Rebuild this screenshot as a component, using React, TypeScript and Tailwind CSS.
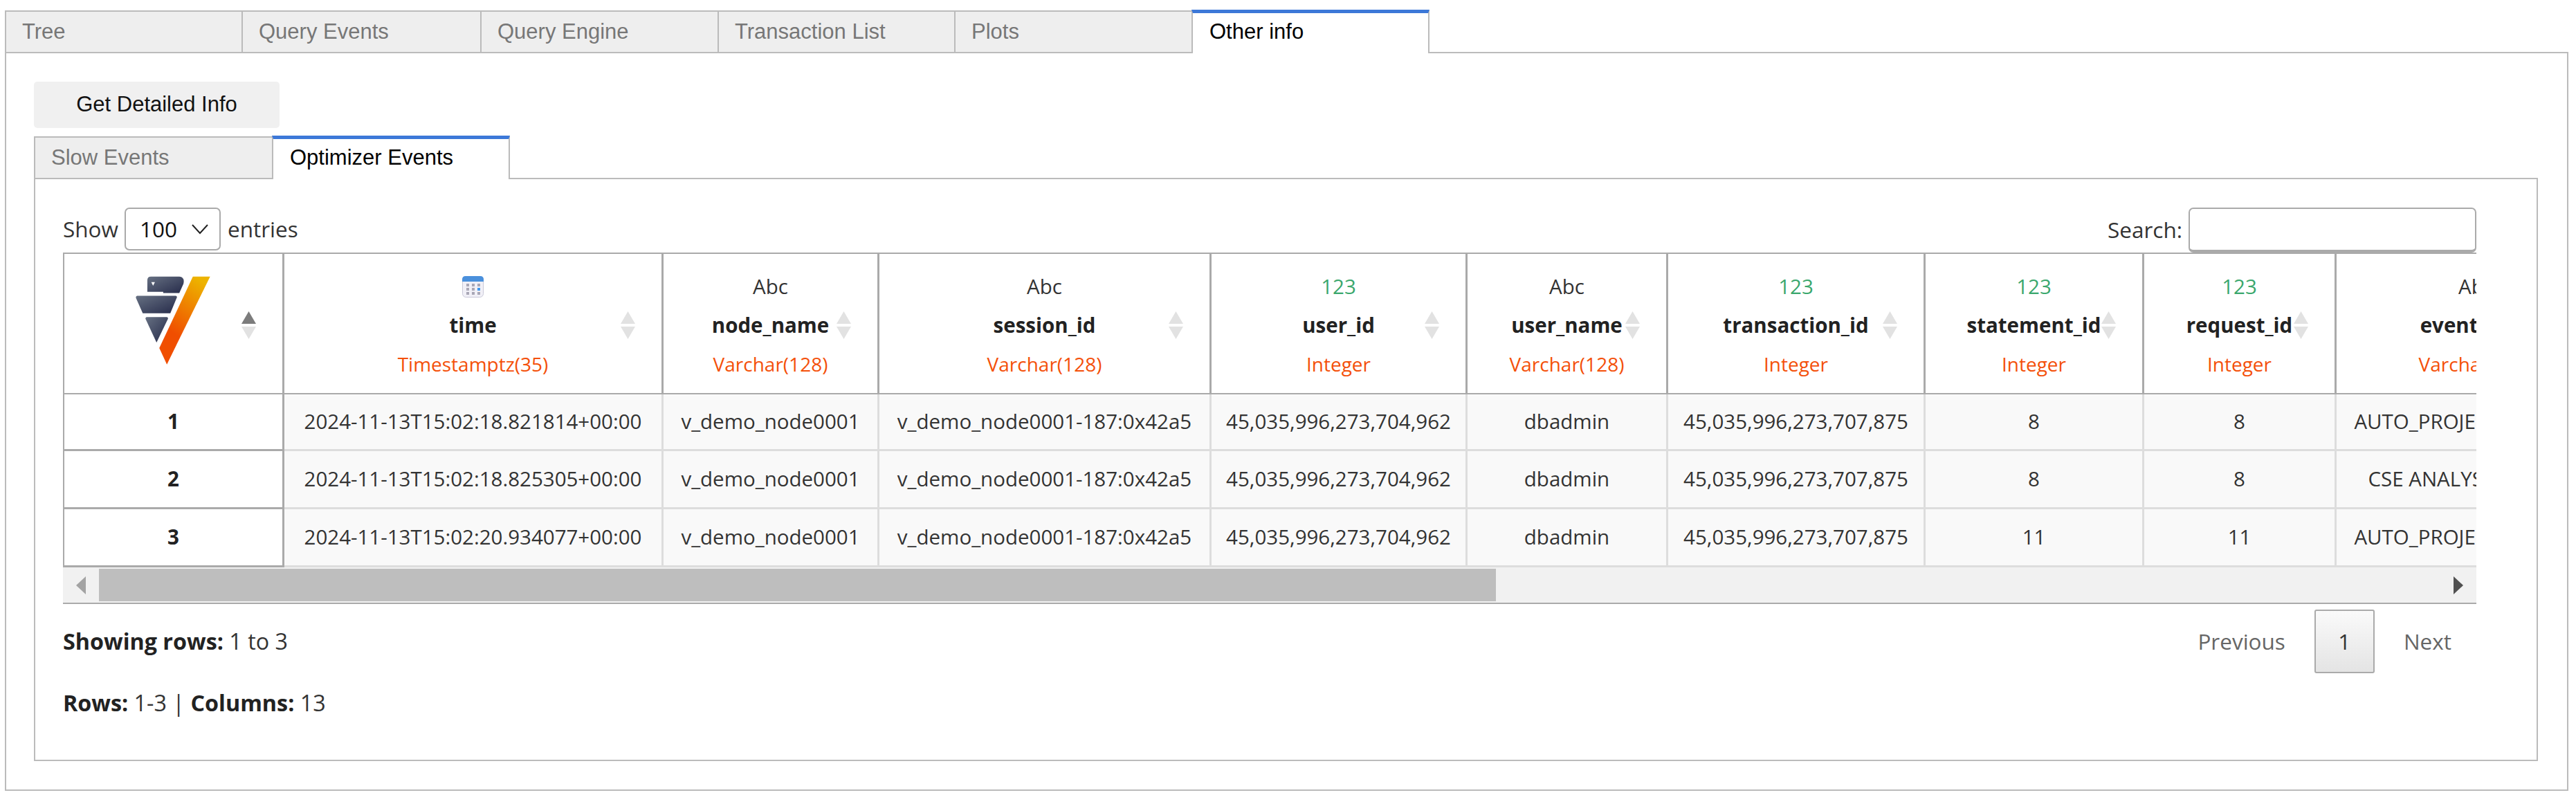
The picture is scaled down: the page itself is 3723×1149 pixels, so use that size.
import React from "react";

const sans = "font-['Open_Sans','Noto_Sans',sans-serif]";

function Logo() {
  return (
    <svg viewBox="315 117 325 383" className="h-[128px] w-[108px]">
      <defs>
        <linearGradient id="dark" x1="0" y1="0" x2="1" y2="1">
          <stop offset="0" stopColor="#667082" />
          <stop offset="1" stopColor="#262b4a" />
        </linearGradient>
        <linearGradient id="flame" x1="0.7" y1="0" x2="0.3" y2="1">
          <stop offset="0" stopColor="#edb300" />
          <stop offset="0.7" stopColor="#f04e00" />
          <stop offset="1" stopColor="#f04e00" />
        </linearGradient>
      </defs>
      <path d="M382 118H505Q530 120 523 150L505 190H435V184H366V134Q366 118 382 118Z" fill="url(#dark)" />
      <path d="M383 142H399L391 158Z" fill="#fff" />
      <path d="M322 202H490Q497 204 494 210L466 278H346L316 210Q316 203 322 202Z" fill="url(#dark)" />
      <path d="M362 294H451Q458 296 455 303L406 405L358 302Q357 296 362 294Z" fill="url(#dark)" />
      <path d="M564 118H639L451 500L418 429Z" fill="url(#flame)" />
    </svg>
  );
}

function Calendar() {
  return (
    <svg viewBox="0 0 31 31" className="h-[31px] w-[31px]">
      <rect x="0.5" y="0.5" width="30" height="30" rx="5" fill="#f1f0f7" stroke="#c9c8d8" />
      <path d="M0 8V5Q0 0 5 0H26Q31 0 31 5V8Z" fill="#4a90dc" />
      {[6, 14, 22].map((x) =>
        [12, 18, 24].map((y) => (
          <rect key={`${x}-${y}`} x={x} y={y - 1} width="4" height="4" fill={x === 22 && y === 18 ? "#3f97ee" : "#a9a7b6"} />
        ))
      )}
    </svg>
  );
}

function Sort({ active }: { active?: boolean }) {
  return (
    <svg viewBox="0 0 21 40" className="absolute top-[83px] right-[38px] h-[40px] w-[21px]">
      <path d="M10.5 0L21 18H0Z" fill={active ? "#7c7c7c" : "#e2e2e2"} />
      <path d="M0 22H21L10.5 40Z" fill="#e2e2e2" />
    </svg>
  );
}

const th = "relative border-t-[2px] border-r-[3px] border-b-[2px] border-[#aaa] bg-white p-0 text-center align-top font-normal";
const td = "h-[82px] overflow-hidden border-r-[3px] border-b-[3px] border-[#ddd] bg-[#f9f9f9] p-0 text-center text-[29.5px] whitespace-nowrap text-[#333]";

function Head({ kind, name, type, width }: { kind: React.ReactNode; name: string; type: string; width: string }) {
  return (
    <th className={`${th} ${width}`}>
      <div className="mt-[19px] flex h-[56px] items-center justify-center text-[29.5px] leading-none">{kind}</div>
      <div className="h-[56px] text-[29.5px] leading-[56px] font-bold text-[#222]">{name}</div>
      <div className="h-[56px] text-[28px] leading-[56px] text-[#f4500a]">{type}</div>
      <div className="h-[14px]" />
      <Sort />
    </th>
  );
}

const abc = <span className="text-[#333]">Abc</span>;
const num = <span className="text-[#3aa76d]">123</span>;

const rows = [
  ["1", "2024-11-13T15:02:18.821814+00:00", "8", "AUTO_PROJECTION_USED", "h-[82px]"],
  ["2", "2024-11-13T15:02:18.825305+00:00", "8", "CSE ANALYSIS FAILURE", "h-[84px]"],
  ["3", "2024-11-13T15:02:20.934077+00:00", "11", "AUTO_PROJECTION_USED", "h-[84px]"],
];

function Tab({ label, width, active }: { label: string; width: string; active?: boolean }) {
  return active ? (
    <div className={`relative z-10 -mt-[1px] -mb-[2px] h-[63px] border-x-[2px] border-t-[5px] border-x-[#bbb] border-t-[#3c78d8] bg-white pl-[24px] text-black ${width}`}>
      <span className="block leading-[54px]">{label}</span>
    </div>
  ) : (
    <div className={`h-[60px] border-t-[2px] border-l-[2px] border-[#bbb] bg-[#eee] pl-[23px] text-[#777] ${width}`}>
      <span className="block leading-[58px]">{label}</span>
    </div>
  );
}

export default function App() {
  return (
    <div className="h-[1149px] w-[3723px] overflow-hidden bg-white pt-[15px] pl-[7px] font-['Liberation_Sans',sans-serif] text-[31px]">
      <div className="flex">
        <Tab width="w-[342px]" label="Tree" />
        <Tab width="w-[345px]" label="Query Events" />
        <Tab width="w-[343px]" label="Query Engine" />
        <Tab width="w-[342px]" label="Transaction List" />
        <Tab width="w-[343px]" label="Plots" />
        <Tab width="w-[344px]" label="Other info" active />
      </div>
      <div className="h-[1068px] w-[3705px] border-[2px] border-[#bbb] pt-[41px] pl-[40px]">
        <button className="h-[67px] w-[355px] rounded-[5px] bg-[#f0f0f0] text-center text-[31px] text-[#111]">Get Detailed Info</button>
        <div className="mt-[12px] flex">
          <Tab width="w-[344px]" label="Slow Events" />
          <Tab width="w-[344px]" label="Optimizer Events" active />
        </div>
        <div className={`h-[843px] w-[3619px] border-[2px] border-[#bbb] pt-[41px] pl-[40px] ${sans} text-[31.5px] text-[#333]`}>
          <div className="w-[3488px]">
            <div className="flex h-[65px] items-start justify-between">
              <div className="flex h-[62px] items-center">
                <span>Show</span>
                <div className="ml-[9px] flex h-[62px] w-[139px] items-center justify-between rounded-[7px] border-[2px] border-[#aaa] pr-[16px] pl-[20px] text-[#111]">
                  <span>100</span>
                  <svg viewBox="0 0 24 16" className="h-[16px] w-[24px]" fill="none" stroke="#222" strokeWidth="2">
                    <path d="M1 2L12 14L23 2" />
                  </svg>
                </div>
                <span className="ml-[10px]">entries</span>
              </div>
              <div className="relative z-10 flex h-[65px] items-center">
                <span className="-mt-[2px] mr-[9px]">Search:</span>
                <div className="h-[65px] w-[416px] rounded-[7px] border-[2px] border-b-[4px] border-[#aaa] bg-white" />
              </div>
            </div>
            <div className="overflow-hidden">
              <table className="w-[3692px] table-fixed border-separate border-spacing-0">
                <thead>
                  <tr>
                    <th className={`${th} w-[320px] border-l-[2px]`}>
                      <div className="flex justify-center pr-[2px]">
                        <div className="mt-[32px]"><Logo /></div>
                      </div>
                      <Sort active />
                    </th>
                    <Head width="w-[548px]" kind={<Calendar />} name="time" type="Timestamptz(35)" />
                    <Head width="w-[312px]" kind={abc} name="node_name" type="Varchar(128)" />
                    <Head width="w-[480px]" kind={abc} name="session_id" type="Varchar(128)" />
                    <Head width="w-[370px]" kind={num} name="user_id" type="Integer" />
                    <Head width="w-[290px]" kind={abc} name="user_name" type="Varchar(128)" />
                    <Head width="w-[372px]" kind={num} name="transaction_id" type="Integer" />
                    <Head width="w-[316px]" kind={num} name="statement_id" type="Integer" />
                    <Head width="w-[278px]" kind={num} name="request_id" type="Integer" />
                    <Head width="w-[406px]" kind={abc} name="event_type" type="Varchar(128)" />
                  </tr>
                </thead>
                <tbody>
                  {rows.map((r) => (
                    <tr key={r[0]} className={r[4]}>
                      <td className="h-[82px] border-r-[3px] border-b-[3px] border-l-[2px] border-[#aaa] bg-white p-0 text-center text-[29.5px] font-bold text-[#222]">{r[0]}</td>
                      <td className={td}>{r[1]}</td>
                      <td className={td}>v_demo_node0001</td>
                      <td className={td}>v_demo_node0001-187:0x42a5</td>
                      <td className={td}>45,035,996,273,704,962</td>
                      <td className={td}>dbadmin</td>
                      <td className={td}>45,035,996,273,707,875</td>
                      <td className={td}>{r[2]}</td>
                      <td className={td}>{r[2]}</td>
                      <td className={td}>{r[3]}</td>
                    </tr>
                  ))}
                </tbody>
              </table>
            </div>
            <div className="flex h-[53px] items-center justify-between border-b-[2px] border-[#aaa] bg-[#f1f1f1]">
              <div className="flex h-full flex-1 items-center">
                <svg viewBox="0 0 14 26" className="ml-[19px] h-[26px] w-[14px] shrink-0">
                  <path d="M14 0V26L0 13Z" fill="#a3a3a3" />
                </svg>
                <div className="ml-[19px] h-[47px] w-[2019px] bg-[#bebebe]" />
              </div>
              <svg viewBox="0 0 14 26" className="mr-[19px] h-[26px] w-[14px] shrink-0">
                <path d="M0 0V26L14 13Z" fill="#505050" />
              </svg>
            </div>
            <div className="flex h-[100px] items-start justify-between text-[32.3px]">
              <div className="mt-[30px] leading-[46px]">
                <b className="text-[#222]">Showing rows:</b> 1 to 3
              </div>
              <div className="mt-[8px] flex items-center text-[31.5px] text-[#666]">
                <span>Previous</span>
                <span className="mx-[42px] flex h-[92px] w-[87px] items-center justify-center rounded-[3px] border-[2px] border-[#aaa] bg-gradient-to-b from-[#fafafa] to-[#e4e4e4] text-[#333]">1</span>
                <span className="mr-[36px]">Next</span>
              </div>
            </div>
            <div className="mt-[19px] text-[32.3px] leading-[46px]">
              <b className="text-[#222]">Rows:</b> 1-3 | <b className="text-[#222]">Columns:</b> 13
            </div>
          </div>
        </div>
      </div>
    </div>
  );
}
